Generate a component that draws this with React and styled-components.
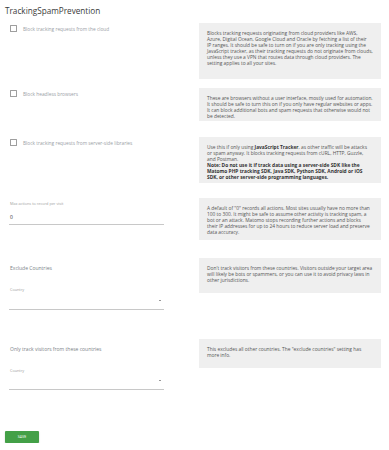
import React from 'react';
import styled, { createGlobalStyle } from 'styled-components';

const Global = createGlobalStyle`
    body {
        margin: 0;
        background: #fff;
        font-family: "Open Sans", "Liberation Sans", sans-serif;
    }
`;

// page frame
const Page = styled.div`
    width: 389px;
    padding: 0 8px 0 5px;
    box-sizing: border-box;
`;

const Title = styled.h2`
    margin: 0;
    padding-top: 5px;
    height: 18px;
    font-size: 8.2px;
    line-height: 12px;
    font-weight: 400;
    color: #3a3a3a;
`;

// one setting: field on the left, help on the right
const Row = styled.div`
    display: grid;
    grid-template-columns: 189px 182px;
    column-gap: 5px;
    align-items: start;
    margin-bottom: ${(p) => p.mb}px;
`;

const Field = styled.div`
    padding: ${(p) => p.top || 0}px 0 0 5px;
`;

const CheckLine = styled.label`
    display: flex;
    align-items: center;
    gap: 6px;
    font-size: 4.8px;
    line-height: 6px;
    color: #9aa0a6;
`;

const Box = styled.span`
    width: 5px;
    height: 5px;
    border: 0.8px solid #9e9e9e;
    border-radius: 0.5px;
    flex: none;
`;

const Help = styled.div`
    background: #efefef;
    color: #555;
    font-size: 4.85px;
    padding: 7px 8px ${(p) => p.bottom || 9}px 8px;
`;

// the help text keeps the reference's line breaks
const Line = styled.div`
    height: 6px;
    line-height: 6px;
    white-space: nowrap;
    font-weight: ${(p) => (p.bold ? 700 : 400)};
    color: ${(p) => (p.bold ? '#333' : 'inherit')};
`;

const Strong = styled.b`
    font-weight: 700;
    color: #333;
`;

const SmallLabel = styled.div`
    font-size: 3.8px;
    line-height: 5px;
    color: #9e9e9e;
`;

const Value = styled.div`
    margin-top: 8px;
    font-size: 5px;
    line-height: 6px;
    color: #333;
`;

const Underline = styled.div`
    width: 155px;
    margin-left: -1px;
    border-bottom: 0.8px solid #c8c8c8;
    padding-bottom: ${(p) => p.pb || 0}px;
    display: flex;
    justify-content: flex-end;
`;

const Heading = styled.div`
    font-size: 5px;
    line-height: 6px;
    color: #7a7f87;
`;

const SelectLabel = styled(SmallLabel)`
    margin-top: 16px;
`;

const Caret = styled.span`
    width: 0;
    height: 0;
    margin: 7.5px 3px 8px 0;
    border-left: 1.6px solid transparent;
    border-right: 1.6px solid transparent;
    border-top: 1.8px solid #333;
`;

const SaveButton = styled.button`
    display: block;
    width: 34px;
    height: 12px;
    padding: 0;
    border: none;
    border-radius: 1px;
    background: #43a047;
    box-shadow: 0 1px 1.5px rgba(0, 0, 0, 0.25);
    color: #fff;
    font-family: "Roboto", "Liberation Sans", sans-serif;
    font-size: 3.4px;
    letter-spacing: 0.1px;
    text-transform: uppercase;
`;

const HelpText = ({ lines, bottom }) => (
    <Help bottom={bottom}>
        {lines.map((l, i) =>
            typeof l === 'string' ? <Line key={i}>{l}</Line> : <Line key={i} bold={l.bold}>{l.text}</Line>
        )}
    </Help>
);

const checkboxes = [
    {
        label: 'Block tracking requests from the cloud',
        mb: 9,
        bottom: 13,
        help: [
            'Blocks tracking requests originating from cloud providers like AWS,',
            'Azure, Digital Ocean, Google Cloud and Oracle by fetching a list of their',
            'IP ranges. It should be safe to turn on if you are only tracking using the',
            'JavaScript tracker, as their tracking requests do not originate from clouds,',
            'unless they use a VPN that routes data through cloud providers. The',
            'setting applies to all your sites.',
        ],
    },
    {
        label: 'Block headless browsers',
        mb: 16,
        bottom: 2,
        help: [
            'These are browsers without a user interface, mostly used for automation.',
            'It should be safe to turn this on if you only have regular websites or apps.',
            'It can block additional bots and spam requests that otherwise would not',
            'be detected.',
        ],
    },
];

const SelectField = ({ title }) => (
    <Field top={7}>
        <Heading>{title}</Heading>
        <SelectLabel>Country</SelectLabel>
        <Underline>
            <Caret />
        </Underline>
    </Field>
);

const App = () => (
    <Page>
        <Global />
        <Title>TrackingSpamPrevention</Title>

        {checkboxes.map((c) => (
            <Row key={c.label} mb={c.mb}>
                <Field top={2}>
                    <CheckLine>
                        <Box />
                        {c.label}
                    </CheckLine>
                </Field>
                <HelpText lines={c.help} bottom={c.bottom} />
            </Row>
        ))}

        <Row mb={15}>
            <Field top={2}>
                <CheckLine>
                    <Box />
                    Block tracking requests from server-side libraries
                </CheckLine>
            </Field>
            <HelpText
                bottom={3}
                lines={[
                    {
                        text: (
                            <>
                                Use this if only using <Strong>JavaScript Tracker</Strong>, as other
                                traffic will be attacks
                            </>
                        ),
                    },
                    'or spam anyway. It blocks tracking requests from cURL, HTTP, Guzzle,',
                    'and Postman.',
                    { bold: true, text: 'Note: Do not use it if track data using a server-side SDK like the' },
                    { bold: true, text: 'Matomo PHP tracking SDK, Java SDK, Python SDK, Android or iOS' },
                    { bold: true, text: 'SDK, or other server-side programming languages.' },
                ]}
            />
        </Row>

        <Row mb={18}>
            <Field top={3}>
                <SmallLabel>Max actions to record per visit</SmallLabel>
                <Value>0</Value>
                <Underline pb={4} />
            </Field>
            <HelpText
                bottom={5}
                lines={[
                    'A default of "0" records all actions. Most sites usually have no more than',
                    '100 to 300. It might be safe to assume other activity is tracking spam, a',
                    'bot or an attack. Matomo stops recording further actions and blocks',
                    'their IP addresses for up to 24 hours to reduce server load and preserve',
                    'data accuracy.',
                ]}
            />
        </Row>

        <Row mb={29}>
            <SelectField title="Exclude Countries" />
            <HelpText
                bottom={10}
                lines={[
                    "Don't track visitors from these countries. Visitors outside your target area",
                    'will likely be bots or spammers, or you can use it to avoid privacy laws in',
                    'other jurisdictions.',
                ]}
            />
        </Row>

        <Row mb={41}>
            <SelectField title="Only track visitors from these countries" />
            <HelpText
                bottom={10}
                lines={[
                    'This excludes all other countries. The "exclude countries" setting has',
                    'more info.',
                ]}
            />
        </Row>

        <SaveButton>Save</SaveButton>
    </Page>
);

export default App;
